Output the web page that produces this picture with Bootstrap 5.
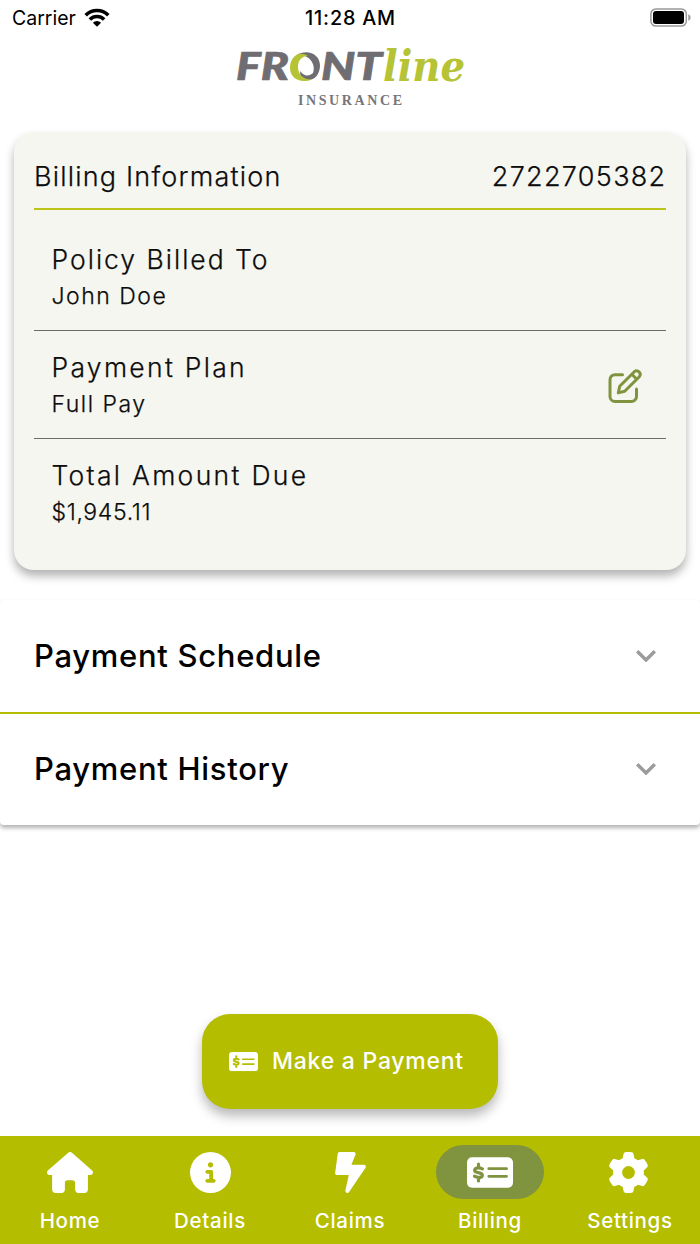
<!DOCTYPE html>
<html lang="en">
<head>
<meta charset="utf-8">
<meta name="viewport" content="width=device-width, initial-scale=1">
<title>Frontline Insurance - Billing</title>
<link href="https://cdn.jsdelivr.net/npm/bootstrap@5.3.0/dist/css/bootstrap.min.css" rel="stylesheet">
<style>
  :root { --lime: #b4bd00; --olive: #809440; }
  body { font-family: Inter, "Liberation Sans", sans-serif; color: #000; background: #fff; height: 1244px; overflow: hidden; }
  svg { display: block; flex: none; overflow: visible; }
  .status-bar { height: 36px; padding: 0 9px 0 12px; font-size: 19.5px; line-height: 36px; }
  .status-bar > * { flex: 1 1 0; }
  .clock { font-size: 19.8px; font-weight: 500; letter-spacing: .8px; padding-right: 2px; }
  .brand-row { height: 96px; }
  .bill-card { margin: 0 14px; padding: 0 20px; border: 0; border-radius: 20px; background: #f5f6f0; color: #0c0c0c; box-shadow: 0 6px 10px rgba(0,0,0,.3); font-weight: 300; -webkit-text-stroke: .25px #0c0c0c; }
  .bill-head { height: 78px; border-bottom: 2px solid #bcc41a; padding-top: 15px; font-size: 27px; }
  .bill-title { letter-spacing: 1.2px; }
  .bill-number { letter-spacing: 1.3px; margin-right: -.5px; }
  .bill-row { padding: 18px 24px 16px 17.5px; border-bottom: 1px solid #6c6c6a; line-height: 36px; }
  .bill-row:nth-child(2) { padding-top: 31px; }
  .bill-row:last-child { border: 0; padding-bottom: 40px; }
  .lbl { font-size: 26.5px; letter-spacing: 2px; margin-bottom: 1px; }
  .lbl-wide { letter-spacing: 2.3px; }
  .val { font-size: 23px; letter-spacing: 1.5px; }
  .amount { letter-spacing: .65px; }
  .panels { margin-top: 30px; border-radius: 4px; box-shadow: 0 3px 4px rgba(0,0,0,.3); background: #fff; }
  .panel-line { height: 112px; padding: 0 44px 0 34px; font-size: 31px; font-weight: 500; letter-spacing: .7px; }
  .panel-line span { margin-top: 1px; }
  .panel-line + .panel-line { height: 113px; border-top: 2px solid var(--lime); padding-bottom: 2px; }
  .pay-btn, .pay-btn:hover { width: 296px; height: 94.5px; margin-bottom: 27.5px; padding: 0 0 0 27px; border: 0; border-radius: 28px; background: var(--lime); color: #fff; font-size: 23px; font-weight: 500; letter-spacing: .75px; gap: 14px; box-shadow: 0 7px 12px rgba(0,0,0,.28); }
  .tabs-bar { height: 108px; background: var(--lime); }
  .tab-item { width: 140px; padding-top: 9px; color: #fff; text-decoration: none; font-size: 20.5px; font-weight: 500; letter-spacing: .7px; }
  .tab-item span { line-height: 28px; margin-top: 8px; }
  .gear { margin-right: 3px; }
  .pill { width: 108px; height: 54px; border-radius: 27px; }
  .active .pill { background: var(--olive); }
</style>
</head>
<body class="d-flex flex-column">
<svg width="0" height="0" class="position-absolute" aria-hidden="true">
  <symbol id="check" viewBox="0 0 576 384">
    <rect width="576" height="384" rx="64" fill="#fff"/>
    <g fill="none" stroke="currentColor" stroke-width="33" stroke-linecap="round" stroke-linejoin="round">
      <path d="M272 144H496M272 240H496"/>
      <path stroke-width="40" d="M193 146C176 138 160 134 145 134C88 134 80 178 122 188L164 200C210 214 198 254 147 254C128 254 110 246 94 239M144 86V130M144 258V298"/>
    </g>
  </symbol>
  <symbol id="chevron" viewBox="0 0 20 12"><path d="M1.2 1.2 10 10 18.8 1.2" fill="none" stroke="#9b9b9b" stroke-width="3.4"/></symbol>
</svg>

<header>
  <div class="status-bar d-flex align-items-center">
    <div class="d-flex align-items-center gap-2"><span>Carrier</span>
      <svg width="26" height="20" viewBox="0 0 26 20"><g fill="none" stroke="#000" stroke-width="3.6"><path d="M1.7 7.2a16 16 0 0 1 22.600 0"/><path d="M5.900 11.500a10 10 0 0 1 14.200 0"/></g><path d="M8.900 14.700a5.800 5.800 0 0 1 8.200 0L13 18.800z"/></svg>
    </div>
    <div class="clock text-center">11:28 AM</div>
    <div class="d-flex justify-content-end">
      <svg width="41" height="20" viewBox="0 0 41 20"><rect x=".9" y=".9" width="35.400" height="17.200" rx="5" fill="none" stroke="#999" stroke-width="1.500"/><rect x="3" y="3" width="31" height="13" rx="3"/><path d="M38.300 6.200c3 1.200 3 5.400 0 6.600z" fill="#999"/></svg>
    </div>
  </div>
  <div class="brand-row d-flex justify-content-center align-items-start">
    <svg width="240" height="80" viewBox="230 36 240 80" role="img" aria-label="Frontline Insurance">
      <g font-family="Lato, sans-serif" font-size="37.5" font-weight="900" font-style="italic" fill="#6f6d72" stroke="#6f6d72" stroke-width=".7">
        <text x="236" y="80" textLength="53" lengthAdjust="spacingAndGlyphs">FR</text>
        <text x="321" y="80" textLength="61" lengthAdjust="spacingAndGlyphs">NT</text>
      </g>
      <path d="M296 55.500C307 48 320 54 320 65.500C320 74 315 80 308 80C302 80 299 75 300.500 71C303 76 309 77 313 73C316 66 311 53 296 55.500Z" fill="#6f6d72"/>
      <path d="M308 56C299 50 290 57 290 68C290 78 300 84 312 79.500C303 80 298 74 298 67C298 60 302 56 308 56Z" fill="#b5c334"/>
      <text x="383" y="80.500" textLength="82" lengthAdjust="spacingAndGlyphs" font-family="'DejaVu Serif', serif" font-size="42" font-weight="700" font-style="italic" fill="#b5c334">line</text>
      <text x="298" y="104.800" textLength="104" font-family="'Liberation Serif', serif" font-size="14" font-weight="700" fill="#77757a">INSURANCE</text>
    </svg>
  </div>
</header>

<main class="flex-grow-1 d-flex flex-column">
  <section class="card bill-card">
    <div class="bill-head d-flex justify-content-between align-items-center">
      <span class="bill-title">Billing Information</span><span class="bill-number">2722705382</span>
    </div>
    <div class="bill-row"><div class="lbl">Policy Billed To</div><div class="val">John Doe</div></div>
    <div class="bill-row d-flex justify-content-between align-items-center">
      <div><div class="lbl lbl-wide">Payment Plan</div><div class="val">Full Pay</div></div>
      <svg width="34" height="34" viewBox="0 0 34 34" fill="none" stroke="#809440" stroke-width="3" stroke-linecap="round" stroke-linejoin="round"><path d="M14.500 5.700H7a5 5 0 0 0-5 5V27.500a5 5 0 0 0 5 5h16.500a5 5 0 0 0 5-5V20"/><path d="M10.300 23.900 11.700 17.300 26.300 2.700a3.550 3.550 0 0 1 5 5L16.700 22.300ZM23.800 5.200 28.800 10.200"/></svg>
    </div>
    <div class="bill-row"><div class="lbl lbl-wide">Total Amount Due</div><div class="val amount">$1,945.11</div></div>
  </section>

  <section class="panels">
    <div class="panel-line d-flex justify-content-between align-items-center"><span>Payment Schedule</span><svg width="20" height="12"><use href="#chevron"/></svg></div>
    <div class="panel-line d-flex justify-content-between align-items-center"><span>Payment History</span><svg width="20" height="12"><use href="#chevron"/></svg></div>
  </section>

  <button class="btn pay-btn d-flex align-items-center mt-auto mx-auto">
    <svg width="29" height="19.300" style="color:#b4bd00"><use href="#check"/></svg><span>Make a Payment</span>
  </button>
</main>

<nav class="tabs-bar d-flex">
  <a class="tab-item d-flex flex-column align-items-center" href="#">
    <div class="pill d-flex align-items-center justify-content-center"><svg width="46" height="41" viewBox="0 0 576 512" fill="#fff"><path d="M575.800 255.500c0 18-15 32.100-32 32.100h-32l.7 160.200c0 2.700-.2 5.400-.5 8.100V472c0 22.100-17.900 40-40 40H392c-22.100 0-40-17.900-40-40V384c0-17.700-14.300-32-32-32H256c-17.700 0-32 14.300-32 32v88c0 22.100-17.900 40-40 40H104c-22.100 0-40-17.900-40-40V287.600H32c-18 0-32-14-32-32.100c0-9 3-17 10-24L266.400 8c7-7 15-8 22-8s15 2 21 7L564.800 231.500c8 7 12 15 11 24z"/></svg></div>
    <span>Home</span></a>
  <a class="tab-item d-flex flex-column align-items-center" href="#">
    <div class="pill d-flex align-items-center justify-content-center"><svg width="41" height="41" viewBox="0 0 512 512" fill="#fff"><path d="M256 512A256 256 0 1 0 256 0a256 256 0 1 0 0 512zM216 336h24V272H216c-13.300 0-24-10.700-24-24s10.700-24 24-24h48c13.300 0 24 10.700 24 24v88h8c13.300 0 24 10.700 24 24s-10.700 24-24 24H216c-13.300 0-24-10.700-24-24s10.700-24 24-24zm40-208a32 32 0 1 1 0 64 32 32 0 1 1 0-64z"/></svg></div>
    <span>Details</span></a>
  <a class="tab-item d-flex flex-column align-items-center" href="#">
    <div class="pill d-flex align-items-center justify-content-center"><svg width="31" height="41" viewBox="0 0 384 512" fill="#fff"><path d="M381.200 172.800C377.100 164.900 368.900 160 360 160h-156.600l50.840-127.100c2.969-7.375 2.062-15.780-2.406-22.380S239.100 0 232 0h-176C43.970 0 33.810 8.906 32.220 20.840l-32 240C-.7179 267.700 1.376 274.600 5.938 279.800C10.500 285 17.090 288 24 288h146.300l-41.780 194.100c-2.406 11.220 3.469 22.560 14 27.090C145.600 511.400 148.800 512 152 512c7.719 0 15.220-3.750 19.810-10.440l208-304C384.800 190.200 385.400 180.700 381.200 172.800z"/></svg></div>
    <span>Claims</span></a>
  <a class="tab-item active d-flex flex-column align-items-center" href="#">
    <div class="pill d-flex align-items-center justify-content-center"><svg width="46" height="31" style="color:#809440"><use href="#check"/></svg></div>
    <span>Billing</span></a>
  <a class="tab-item d-flex flex-column align-items-center" href="#">
    <div class="pill d-flex align-items-center justify-content-center"><svg class="gear" width="41" height="41" viewBox="0 0 512 512" fill="#fff"><path d="M495.900 166.600c3.200 8.700 .5 18.400-6.400 24.600l-43.300 39.400c1.100 8.300 1.700 16.800 1.700 25.400s-.6 17.100-1.700 25.400l43.300 39.400c6.900 6.200 9.600 15.900 6.400 24.600c-4.400 11.900-9.700 23.300-15.800 34.300l-4.700 8.100c-6.600 11-14 21.400-22.100 31.200c-5.900 7.200-15.700 9.600-24.500 6.800l-55.700-17.700c-13.400 10.300-28.200 18.900-44 25.400l-12.500 57.100c-2 9.100-9 16.300-18.200 17.800c-13.800 2.300-28 3.500-42.500 3.500s-28.700-1.200-42.500-3.500c-9.200-1.500-16.200-8.700-18.200-17.800l-12.500-57.100c-15.800-6.500-30.600-15.100-44-25.400L83.100 425.900c-8.800 2.800-18.600 .3-24.500-6.800c-8.100-9.800-15.500-20.200-22.100-31.200l-4.700-8.100c-6.100-11-11.400-22.400-15.800-34.300c-3.200-8.700-.5-18.400 6.400-24.600l43.300-39.400C64.600 273.100 64 264.600 64 256s.6-17.100 1.700-25.400L22.400 191.200c-6.900-6.200-9.600-15.900-6.400-24.600c4.400-11.900 9.700-23.300 15.800-34.300l4.700-8.100c6.600-11 14-21.400 22.100-31.200c5.900-7.200 15.700-9.600 24.500-6.800l55.700 17.700c13.400-10.300 28.200-18.900 44-25.400l12.500-57.100c2-9.100 9-16.300 18.200-17.800C227.300 1.200 241.500 0 256 0s28.700 1.200 42.500 3.500c9.200 1.500 16.200 8.700 18.200 17.800l12.500 57.100c15.800 6.500 30.600 15.100 44 25.400l55.700-17.700c8.800-2.800 18.600-.3 24.500 6.800c8.100 9.800 15.500 20.200 22.100 31.200l4.700 8.100c6.100 11 11.400 22.400 15.800 34.300zM256 336a80 80 0 1 0 0-160 80 80 0 1 0 0 160z"/></svg></div>
    <span>Settings</span></a>
</nav>
<script src="https://cdn.jsdelivr.net/npm/bootstrap@5.3.0/dist/js/bootstrap.bundle.min.js"></script>
</body>
</html>
